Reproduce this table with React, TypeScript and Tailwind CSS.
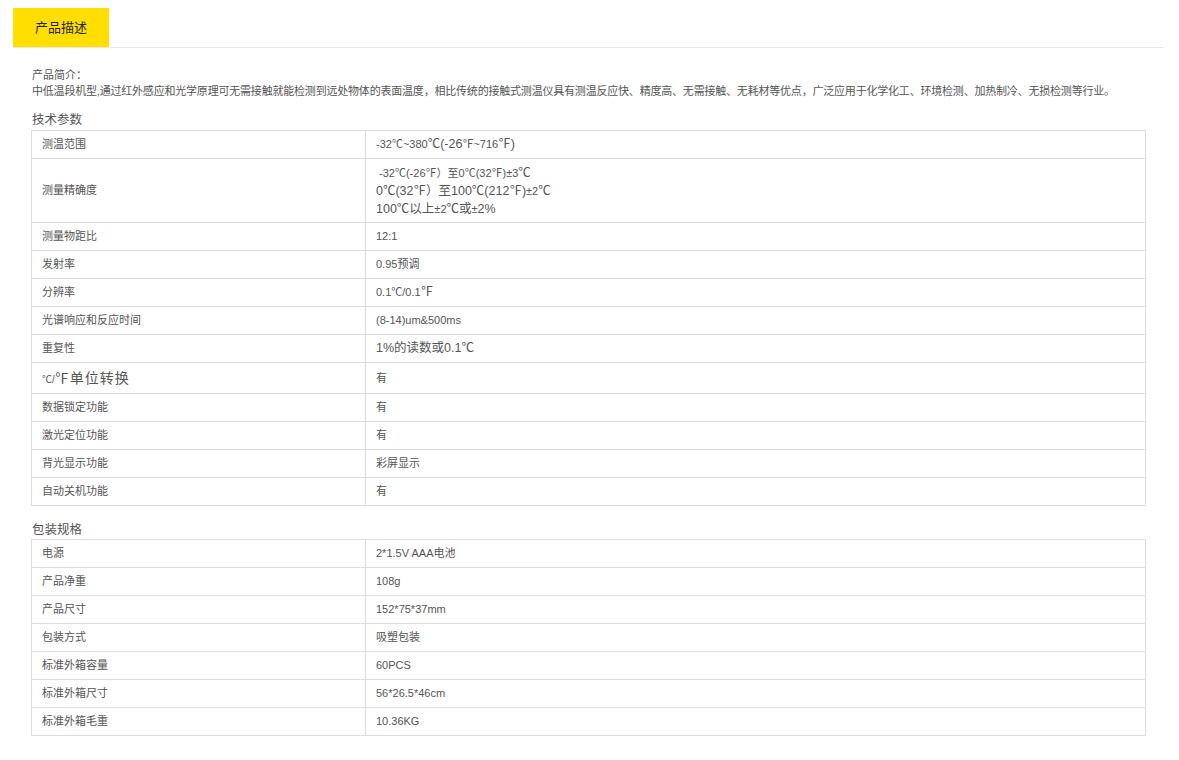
import type { ReactNode } from "react";

// Produktbeschreibung: Reiter oben, kurzer Text, dann zwei Tabellen.

type Row = { label: ReactNode; value: ReactNode; h?: string };

const FONT = "font-['Liberation_Sans','Noto_Sans_CJK_SC',sans-serif]";

const TECH: Row[] = [
  {
    label: "测温范围",
    value: (
      <>
        -32℃~380<span className="text-[12.5px]">℃(-26</span>℉~716<span className="text-[12.5px]">℉)</span>
      </>
    ),
  },
  {
    label: "测量精确度",
    h: "h-[64px]",
    value: (
      <div className="flex flex-col leading-[18px]">
        <span>
          &nbsp;-32℃(-26℉）至0℃(32℉)±3<span className="text-[12.5px]">℃</span>
        </span>
        <span className="text-[12.5px]">
          0℃(32℉）至100℃(212℉)<span className="text-[11px]">±2</span>℃
        </span>
        <span className="text-[12.5px]">
          100℃以上<span className="text-[11px]">±2</span>℃或<span className="text-[11px]">±</span>2%
        </span>
      </div>
    ),
  },
  { label: "测量物距比", value: "12:1" },
  { label: "发射率", value: "0.95预调" },
  {
    label: "分辨率",
    value: (
      <>
        0.1℃/0.1<span className="text-[12.5px]">℉</span>
      </>
    ),
  },
  { label: "光谱响应和反应时间", value: "(8-14)um&500ms" },
  { label: "重复性", value: <span className="text-[12.5px]">1%的读数或0.1℃</span> },
  {
    label: (
      <span className="text-[14px] tracking-[1px]">
        <span className="text-[10px] tracking-normal">℃/</span>℉单位转换
      </span>
    ),
    value: "有",
    h: "h-[31px]",
  },
  { label: "数据锁定功能", value: "有" },
  { label: "激光定位功能", value: "有" },
  { label: "背光显示功能", value: "彩屏显示" },
  { label: "自动关机功能", value: "有" },
];

const PACK: Row[] = [
  { label: "电源", value: "2*1.5V AAA电池" },
  { label: "产品净重", value: "108g" },
  { label: "产品尺寸", value: "152*75*37mm" },
  { label: "包装方式", value: "吸塑包装" },
  { label: "标准外箱容量", value: "60PCS" },
  { label: "标准外箱尺寸", value: "56*26.5*46cm" },
  { label: "标准外箱毛重", value: "10.36KG" },
];

function SpecTable({ rows }: { rows: Row[] }) {
  return (
    <div className="border-x border-t border-[#dddddd]">
      {rows.map((r, i) => (
        <div key={i} className={`flex border-b border-[#dddddd] ${r.h ?? "h-[28px]"}`}>
          <div className="flex w-[334px] shrink-0 items-center border-r border-[#dddddd] pl-[10px]">
            {r.label}
          </div>
          <div className="flex flex-1 items-center pl-[10px]">{r.value}</div>
        </div>
      ))}
    </div>
  );
}

export default function App() {
  return (
    <div className={`h-[760px] w-full bg-white text-[11px] text-[#555] ${FONT}`}>
      <div className="pl-[13px] pr-[15px] pt-2">
        <div className="flex border-b border-[#e8e8e8]">
          <div className="flex h-[39px] w-[96px] items-center justify-center bg-[#ffde00] text-[13px] text-[#222]">
            产品描述
          </div>
        </div>
      </div>

      <div className="w-[1146px] pl-[31px]">
        <div className="mt-[19px] pl-px leading-[16px]">
          <p>产品简介：</p>
          {/* Im Original laufen die Satzzeichen schmaler, daher etwas enger gesetzt. */}
          <p className="tracking-[-0.2px]">
            中低温段机型,通过红外感应和光学原理可无需接触就能检测到远处物体的表面温度，相比传统的接触式测温仪具有测温反应快、精度高、无需接触、无耗材等优点，广泛应用于化学化工、环境检测、加热制冷、无损检测等行业。
          </p>
        </div>

        <h3 className="mt-[12px] h-[19px] pl-px text-[12.5px] leading-[19px]">技术参数</h3>
        <SpecTable rows={TECH} />

        <h3 className="mt-[15px] h-[18px] pl-px text-[12.5px] leading-[18px]">包装规格</h3>
        <SpecTable rows={PACK} />
      </div>
    </div>
  );
}
